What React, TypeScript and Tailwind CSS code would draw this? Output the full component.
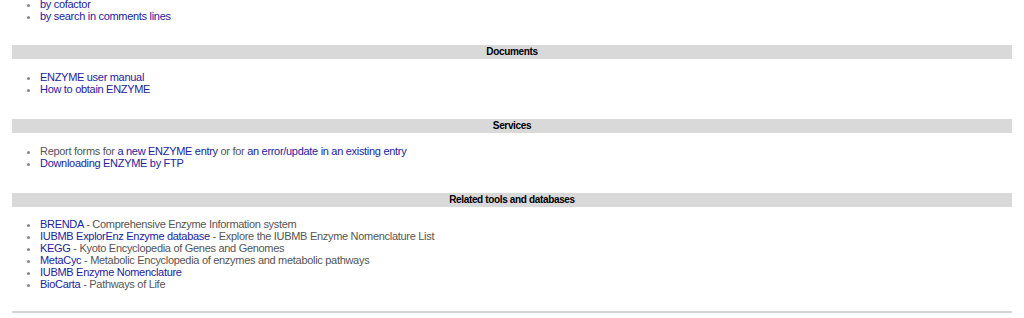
import React from 'react';

type Part = { text: string; link?: boolean };

const link = 'text-[#2222a0]';
const plain = 'text-[#555]';

function Bar({ title }: { title: string }) {
  return (
    <div className="mt-6 h-[14px] bg-[#d9d9d9] text-center text-[10px] leading-[14px] font-bold tracking-[-0.35px] text-black">
      {title}
    </div>
  );
}

function List({ items, className = 'mt-3' }: { items: Part[][]; className?: string }) {
  return (
    <ul className={`${className} list-disc pl-[28px] marker:text-[#888]`}>
      {items.map((parts, i) => (
        <li key={i} className="h-[12px] leading-[12px]">
          {parts.map((p, j) => (
            <span key={j} className={p.link ? link : plain}>
              {p.text}
            </span>
          ))}
        </li>
      ))}
    </ul>
  );
}

export default function App() {
  return (
    <div className="h-[318px] overflow-hidden bg-white px-3 text-[11px] tracking-[-0.3px]" style={{ fontFamily: '"Liberation Sans", Arial, sans-serif' }}>
      <List
        className="-mt-[2px]"
        items={[[{ text: 'by cofactor', link: true }], [{ text: 'by search in comments lines', link: true }]]}
      />

      <div className="pt-[23px]">
        <div className="h-[14px] bg-[#d9d9d9] text-center text-[10px] leading-[14px] font-bold tracking-[-0.35px] text-black">Documents</div>
      </div>
      <List
        items={[[{ text: 'ENZYME user manual', link: true }], [{ text: 'How to obtain ENZYME', link: true }]]}
      />

      <Bar title="Services" />
      <List
        items={[
          [
            { text: 'Report forms for ' },
            { text: 'a new ENZYME entry', link: true },
            { text: ' or for ' },
            { text: 'an error/update in an existing entry', link: true },
          ],
          [{ text: 'Downloading ENZYME by FTP', link: true }],
        ]}
      />

      <Bar title="Related tools and databases" />
      <List
        className="mt-[11px]"
        items={[
          [{ text: 'BRENDA', link: true }, { text: ' - Comprehensive Enzyme Information system' }],
          [{ text: 'IUBMB ExplorEnz Enzyme database', link: true }, { text: ' - Explore the IUBMB Enzyme Nomenclature List' }],
          [{ text: 'KEGG', link: true }, { text: ' - Kyoto Encyclopedia of Genes and Genomes' }],
          [{ text: 'MetaCyc', link: true }, { text: ' - Metabolic Encyclopedia of enzymes and metabolic pathways' }],
          [{ text: 'IUBMB Enzyme Nomenclature', link: true }],
          [{ text: 'BioCarta', link: true }, { text: ' - Pathways of Life' }],
        ]}
      />

      <hr className="mt-[21px] border-t-2 border-[#d4d4d4]" />
    </div>
  );
}
